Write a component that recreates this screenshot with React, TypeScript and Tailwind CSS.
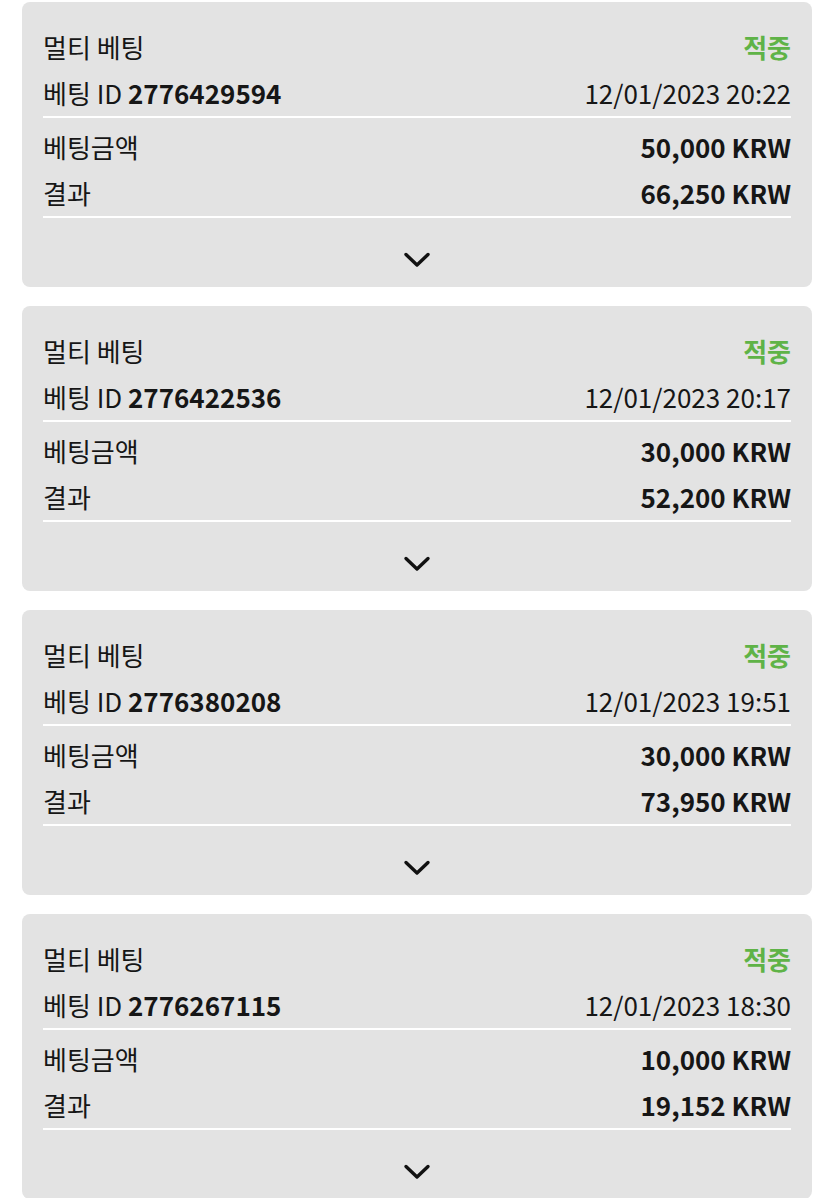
import React from 'react';

type Bet = {
  id: string;
  date: string;
  stake: string;
  result: string;
};

const bets: Bet[] = [
  { id: '2776429594', date: '12/01/2023 20:22', stake: '50,000 KRW', result: '66,250 KRW' },
  { id: '2776422536', date: '12/01/2023 20:17', stake: '30,000 KRW', result: '52,200 KRW' },
  { id: '2776380208', date: '12/01/2023 19:51', stake: '30,000 KRW', result: '73,950 KRW' },
  { id: '2776267115', date: '12/01/2023 18:30', stake: '10,000 KRW', result: '19,152 KRW' },
];

const Chevron = () => (
  <svg width="28" height="16" viewBox="0 0 28 16" fill="none">
    <path d="M3 2.5 L14 13 L25 2.5" stroke="#111" strokeWidth="3.4" strokeLinecap="round" strokeLinejoin="round" />
  </svg>
);

const BetCard: React.FC<{ bet: Bet }> = ({ bet }) => (
  <div className="h-[285px] shrink-0 bg-[#e3e3e3] rounded-[8px] px-[21px] pt-[22px] flex flex-col">
    {/* Header */}
    <div className="border-b-2 border-white">
      <div className="h-[46px] flex items-center justify-between">
        <span>멀티 베팅</span>
        <span className="font-bold text-[#5fb347]">적중</span>
      </div>
      <div className="h-[46px] flex items-center justify-between">
        <span>
          베팅 ID <span className="font-bold">{bet.id}</span>
        </span>
        <span>{bet.date}</span>
      </div>
    </div>

    {/* Amounts */}
    <div className="pt-[6px] border-b-2 border-white">
      <div className="h-[46px] flex items-center justify-between">
        <span>베팅금액</span>
        <span className="font-bold">{bet.stake}</span>
      </div>
      <div className="h-[46px] flex items-center justify-between">
        <span>결과</span>
        <span className="font-bold">{bet.result}</span>
      </div>
    </div>

    <div className="flex justify-center pt-[34px]">
      <Chevron />
    </div>
  </div>
);

export default function App() {
  return (
    <div className="w-[835px] h-[1198px] overflow-hidden bg-white pt-[2px] pl-[22px] pr-[23px] flex flex-col gap-[19px] text-[26px] leading-none text-[#161616] font-['Noto_Sans_CJK_KR','Noto_Sans',sans-serif]">
      {bets.map((bet) => (
        <BetCard key={bet.id} bet={bet} />
      ))}
    </div>
  );
}
